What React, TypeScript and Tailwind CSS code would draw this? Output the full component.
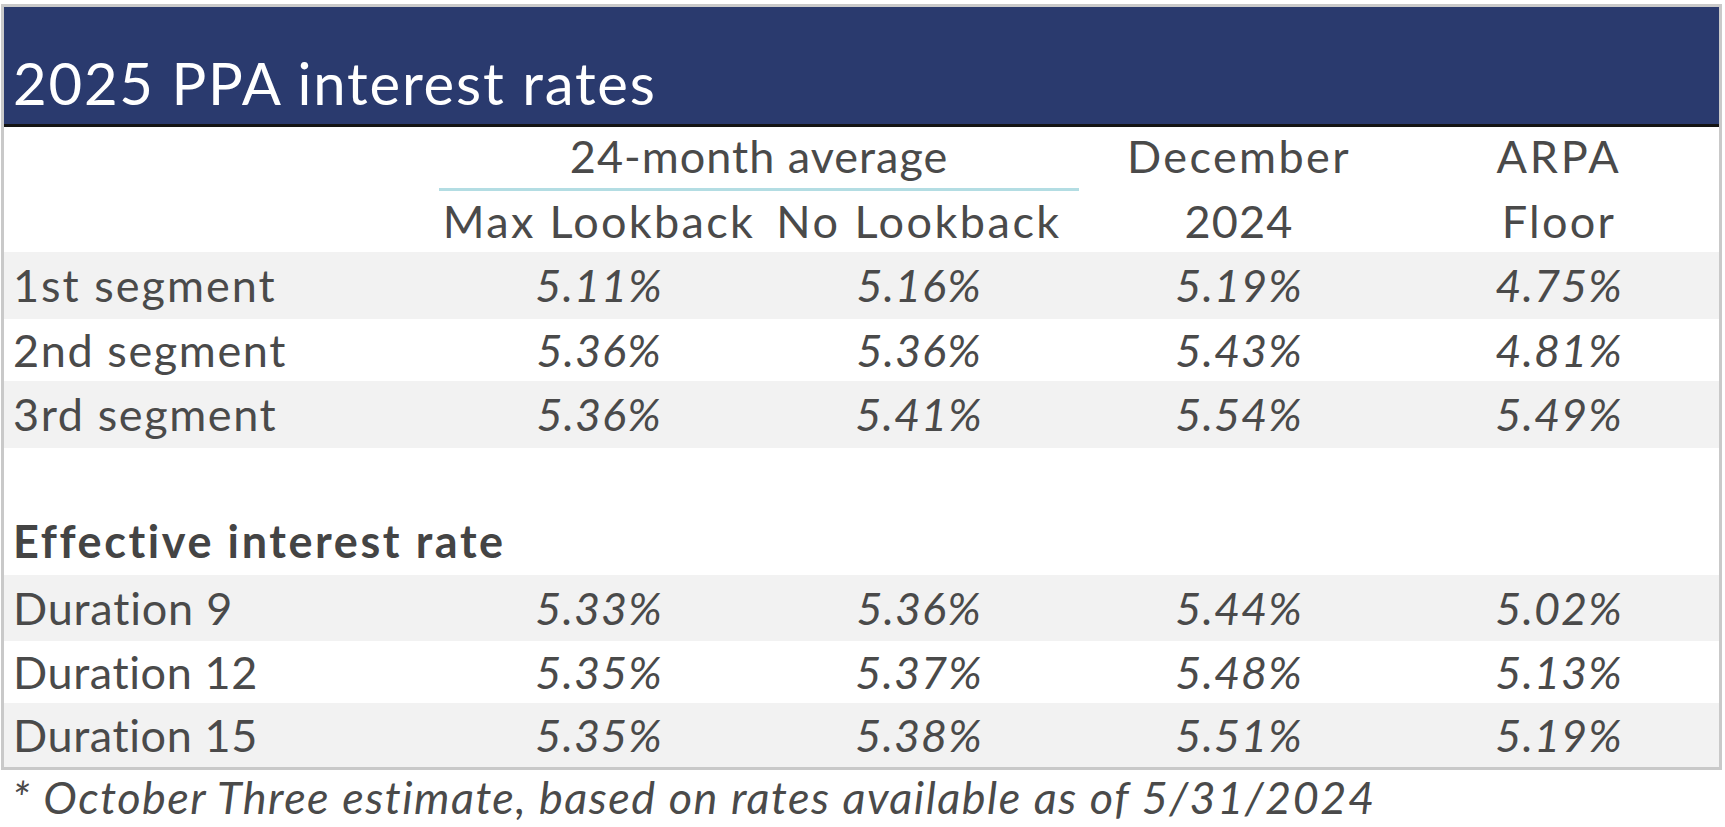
import React from "react";

type Row = { label: string; values: string[]; shade: boolean; h: string; track: string };

const segRows: Row[] = [
  { label: "1st segment", values: ["5.11%", "5.16%", "5.19%", "4.75%"], shade: true, h: "h-[67px] leading-[67px]", track: "tracking-[2px]" },
  { label: "2nd segment", values: ["5.36%", "5.36%", "5.43%", "4.81%"], shade: false, h: "h-[62px] leading-[62px]", track: "tracking-[1.6px]" },
  { label: "3rd segment", values: ["5.36%", "5.41%", "5.54%", "5.49%"], shade: true, h: "h-[67px] leading-[67px]", track: "tracking-[1.6px]" },
];

const durRows: Row[] = [
  { label: "Duration 9", values: ["5.33%", "5.36%", "5.44%", "5.02%"], shade: true, h: "h-[66px] leading-[66px]", track: "tracking-[0.8px]" },
  { label: "Duration 12", values: ["5.35%", "5.37%", "5.48%", "5.13%"], shade: false, h: "h-[62px] leading-[62px]", track: "tracking-[0.6px]" },
  { label: "Duration 15", values: ["5.35%", "5.38%", "5.51%", "5.19%"], shade: true, h: "h-[64px] leading-[64px]", track: "tracking-[0.6px]" },
];

function DataRow({ row }: { row: Row }) {
  return (
    <div className={`flex ${row.h} ${row.shade ? "bg-[#f2f2f2]" : "bg-white"}`}>
      <div className={`w-[435px] pl-[9px] ${row.track}`}>{row.label}</div>
      {row.values.map((v, i) => (
        <div key={i} className="w-[320px] text-center italic tracking-[1px]">
          {v}
        </div>
      ))}
    </div>
  );
}

export default function App() {
  return (
    <div
      className="w-[1725px] h-[827px] bg-white text-[#4a4a4a] text-[45px] overflow-hidden"
      style={{ fontFamily: '"Lato", "Liberation Sans", sans-serif' }}
    >
      <div className="ml-[1px] mt-[4px] w-[1721px] border-[3px] border-[#c9c9c9]">
        {/* Title band */}
        <div className="h-[117px] bg-[#2a3a6e] flex items-end pl-[9px] pb-[12px]">
          <div className="text-white text-[58px] leading-[58px] tracking-[1.8px]">
            2025 PPA interest rates
          </div>
        </div>
        <div className="h-[3px] bg-[#141414]" />

        {/* Column headers */}
        <div className="flex">
          <div className="w-[435px]" />
          <div className="w-[640px] h-[64px] pb-[3px] border-b-[3px] border-[#b3dde3] text-center leading-[58px] tracking-[1px]">
            24-month average
          </div>
          <div className="w-[320px] h-[64px] text-center leading-[58px] tracking-[2.4px]">December</div>
          <div className="w-[320px] h-[64px] text-center leading-[58px] tracking-[2.8px]">ARPA</div>
        </div>
        <div className="flex h-[61px] leading-[61px]">
          <div className="w-[435px]" />
          <div className="w-[320px] text-center tracking-[2.3px]">Max Lookback</div>
          <div className="w-[320px] text-center tracking-[2.5px]">No Lookback</div>
          <div className="w-[320px] text-center tracking-[1.2px]">2024</div>
          <div className="w-[320px] text-center tracking-[2.3px]">Floor</div>
        </div>

        {segRows.map((r) => (
          <DataRow key={r.label} row={r} />
        ))}

        <div className="h-[60px]" />
        <div className="h-[67px] leading-[67px] pl-[9px] font-bold tracking-[2.6px] text-[#444444]">
          Effective interest rate
        </div>

        {durRows.map((r) => (
          <DataRow key={r.label} row={r} />
        ))}
      </div>

      <div className="pl-[12px] italic leading-[54px] tracking-[1.5px]">
        * October Three estimate, based on rates available as of 5/31/2024
      </div>
    </div>
  );
}
